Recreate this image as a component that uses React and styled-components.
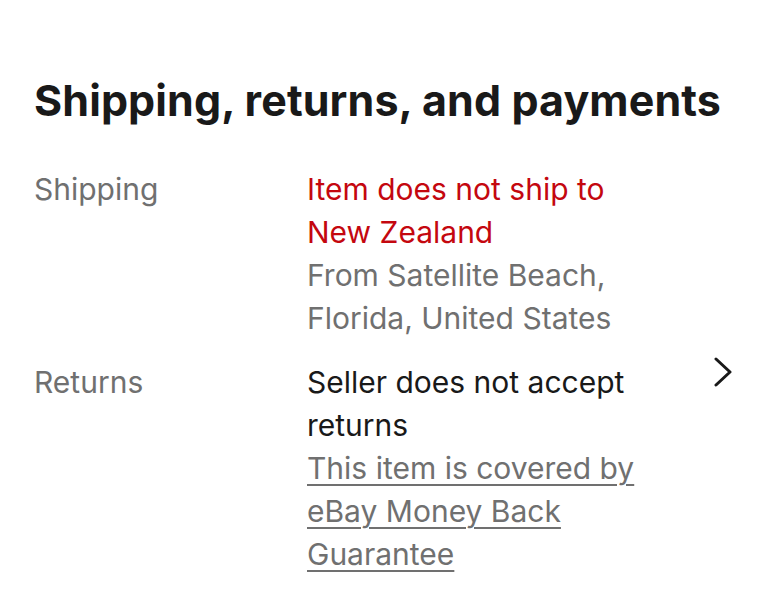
import styled, { createGlobalStyle } from "styled-components"

const GlobalStyle = createGlobalStyle`
  html, body {
    margin: 0;
    padding: 0;
    background: #ffffff;
  }
  body {
    font-family: Inter, "Liberation Sans", sans-serif;
  }
`

//STYLES
export const Section = styled.section`
  width: 774px;
  height: 600px;
  box-sizing: border-box;
  padding: 72px 40px 0 34px;
  background: #fff;
`

export const Title = styled.h2`
  margin: 0 0 40px 0;
  font-size: 43px;
  line-height: 56px;
  font-weight: 700;
  color: #191919;
  letter-spacing: 0.1px;
`

export const Rows = styled.div`
  display: flex;
  flex-direction: column;
  gap: 21px;
`

export const Row = styled.div`
  display: grid;
  grid-template-columns: 273px 345px 1fr;
  align-items: start;
`

export const Label = styled.div`
  font-size: 30px;
  line-height: 43px;
  color: #707070;
`

export const Value = styled.div`
  display: flex;
  flex-direction: column;
  font-size: 30px;
  line-height: 43px;
`

export const Line = styled.span`
  color: ${(p) => p.color || "#191919"};
`

export const Link = styled.a`
  color: #707070;
  text-decoration: underline;
  text-underline-offset: 5px;
  text-decoration-thickness: 2px;
`

export const Chevron = styled.div`
  display: flex;
  justify-content: flex-end;
  margin-top: -4px;
`
//END STYLES

const ChevronRight = () => (
  <svg width="22" height="30" viewBox="0 0 22 30">
    <path d="M4 2 L18 15 L4 28" fill="none" stroke="#191919" strokeWidth="3" strokeLinecap="round" strokeLinejoin="round" />
  </svg>
)

const App = () => {
  return (
    <>
      <GlobalStyle />
      <Section>
        <Title>Shipping, returns, and payments</Title>
        <Rows>
          <Row>
            <Label>Shipping</Label>
            <Value>
              <Line color="#c4070f">Item does not ship to New Zealand</Line>
              <Line color="#707070">From Satellite Beach, Florida, United States</Line>
            </Value>
            <div />
          </Row>
          <Row>
            <Label>Returns</Label>
            <Value>
              <Line>Seller does not accept returns</Line>
              <Line>
                <Link href="#">This item is covered by eBay Money Back Guarantee</Link>
              </Line>
            </Value>
            <Chevron>
              <ChevronRight />
            </Chevron>
          </Row>
        </Rows>
      </Section>
    </>
  )
}

export default App
